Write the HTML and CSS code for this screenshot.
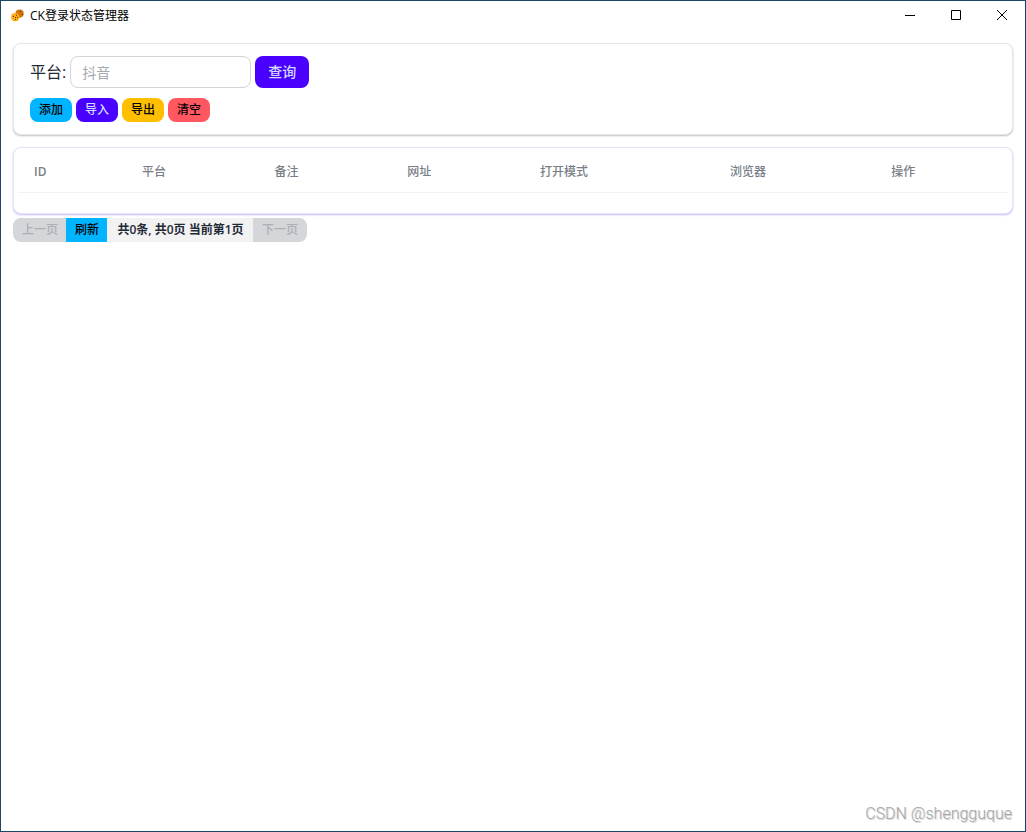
FILE: index.html
```html
<!DOCTYPE html>
<html lang="zh-CN">
<head>
<meta charset="utf-8">
<title>CK登录状态管理器</title>
<link rel="stylesheet" href="styles.css">
</head>
<body>
<div class="window">
  <header class="titlebar">
    <svg class="app-icon" viewBox="0 0 14 14" aria-hidden="true">
      <circle cx="8.6" cy="4.6" r="4.1" fill="#cf7407"/>
      <circle cx="4.2" cy="8.2" r="4.1" fill="#ffad14"/>
      <path d="M2 7h1v1H2zM5 5.8h1v1H5zM6 8h1v1H6zM4 10h1v1H4zM4 8h1v1H4zM9 2h1v1H9zM11 5h1v1h-1z" fill="#6b3206"/>
    </svg>
    <h1 class="title">CK登录状态管理器</h1>
    <div class="window-controls">
      <button class="control" aria-label="最小化"><svg viewBox="0 0 12 12"><path d="M1 6.5h10"/></svg></button>
      <button class="control" aria-label="最大化"><svg viewBox="0 0 12 12"><path d="M1.5 1.5h9v9h-9z"/></svg></button>
      <button class="control" aria-label="关闭"><svg viewBox="0 0 12 12"><path d="M1 1l10 10M11 1L1 11"/></svg></button>
    </div>
  </header>
  <main class="content">
    <section class="card search-card">
      <form class="search-row">
        <label for="platform">平台:</label>
        <input class="input" id="platform" type="text" placeholder="抖音">
        <button class="btn btn-md primary" type="button">查询</button>
      </form>
      <div class="actions">
        <button class="btn info" type="button">添加</button>
        <button class="btn primary" type="button">导入</button>
        <button class="btn warning" type="button">导出</button>
        <button class="btn error" type="button">清空</button>
      </div>
    </section>
    <section class="card table-card">
      <table class="table">
        <thead>
          <tr>
            <th class="col-id">ID</th>
            <th>平台</th>
            <th>备注</th>
            <th>网址</th>
            <th class="col-mode">打开模式</th>
            <th class="col-browser">浏览器</th>
            <th>操作</th>
          </tr>
        </thead>
        <tbody></tbody>
      </table>
    </section>
    <nav class="pager">
      <button class="btn page" type="button" disabled>上一页</button>
      <button class="btn info" type="button">刷新</button>
      <span class="btn status">共0条, 共0页 当前第1页</span>
      <button class="btn page" type="button" disabled>下一页</button>
    </nav>
  </main>
  <footer class="watermark">CSDN @shengguque</footer>
</div>
</body>
</html>
```

FILE: styles.css
```css
* {
  box-sizing: border-box;
}

body {
  margin: 0;
  background: #fff;
  color: #1f2937;
  font-family: "Open Sans", "Noto Sans CJK SC", sans-serif;
  font-size: 16px;
  line-height: 24px;
}

button,
input {
  font: inherit;
}

.window {
  display: flex;
  flex-direction: column;
  min-height: 100vh;
  border: 1px solid #1b4765;
  border-right-color: #223a6a;
}

.titlebar {
  display: flex;
  align-items: center;
  height: 30px;
  padding-left: 10px;
  color: #000;
}

.app-icon {
  width: 14px;
  height: 14px;
}

.title {
  margin: 0 auto 0 5px;
  font-size: 12px;
  font-weight: 400;
}

.window-controls {
  display: flex;
  align-self: flex-start;
}

.control {
  display: flex;
  align-items: center;
  justify-content: center;
  width: 46px;
  height: 28px;
  padding: 0;
  border: 0;
  background: none;
}

.control svg {
  width: 12px;
  height: 12px;
  fill: none;
  stroke: #000;
}

.content {
  display: flex;
  flex: 1;
  flex-direction: column;
  padding: 12px;
}

.card {
  border-radius: 8px;
  background: #fff;
}

.search-card {
  display: flex;
  flex-direction: column;
  gap: 10px;
  margin-bottom: 12px;
  padding: 12px 16px;
  border: 1px solid #e8e8e8;
  box-shadow: 0 1px 2px rgba(0, 0, 0, 0.25);
}

.search-row,
.actions {
  display: flex;
  align-items: center;
  gap: 4px;
}

.input {
  width: 181px;
  height: 32px;
  padding: 0 11px;
  border: 1px solid #d2d4d7;
  border-radius: 8px;
  background: #fff;
  color: inherit;
  font-size: 14px;
}

.input::placeholder {
  color: #a5a9b0;
  opacity: 1;
}

.btn {
  height: 24px;
  padding: 0 9px;
  border: 0;
  border-radius: 8px;
  color: #000;
  font-size: 12px;
  font-weight: 500;
  line-height: 24px;
  white-space: nowrap;
}

.btn-md {
  height: 32px;
  padding: 0 13px;
  font-size: 14px;
}

.primary {
  background: #4a00ff;
  color: #d2dcff;
}

.info {
  background: #00b4ff;
}

.warning {
  background: #ffbe00;
}

.error {
  background: #ff5861;
}

.table-card {
  margin-bottom: 4px;
  padding: 4px 4px 20px;
  border: 1px solid #e5e6f2;
  box-shadow: 0 1px 2px rgba(74, 60, 255, 0.35);
}

.table {
  width: 100%;
  border-spacing: 0;
  table-layout: fixed;
}

.table th {
  height: 41px;
  padding: 0 16px;
  border-bottom: 1px solid #f2f2f2;
  color: #797e87;
  font-size: 12px;
  font-weight: 500;
  text-align: left;
}

.table .col-id {
  width: 10.9%;
  font-weight: 600;
}

.table .col-mode {
  width: 19.2%;
}

.table .col-browser {
  width: 16.3%;
}

.pager {
  display: flex;
  align-self: flex-start;
  overflow: hidden;
  border-radius: 8px;
}

.pager .btn {
  border-radius: 0;
}

.pager .btn + .btn {
  margin-left: -1px;
}

.pager .page {
  background: #d4d6d9;
  color: #abafb5;
}

.pager .status {
  min-width: 147px;
  background: #f2f2f2;
  color: #1f2937;
  font-weight: 600;
  text-align: center;
}

.watermark {
  align-self: flex-end;
  padding: 0 13px 5px;
  color: #a4a4a4;
  font-family: Roboto, "Liberation Sans", sans-serif;
  font-size: 16px;
  font-weight: 300;
  text-shadow: 1px 1px 1px #ccc;
}
```
